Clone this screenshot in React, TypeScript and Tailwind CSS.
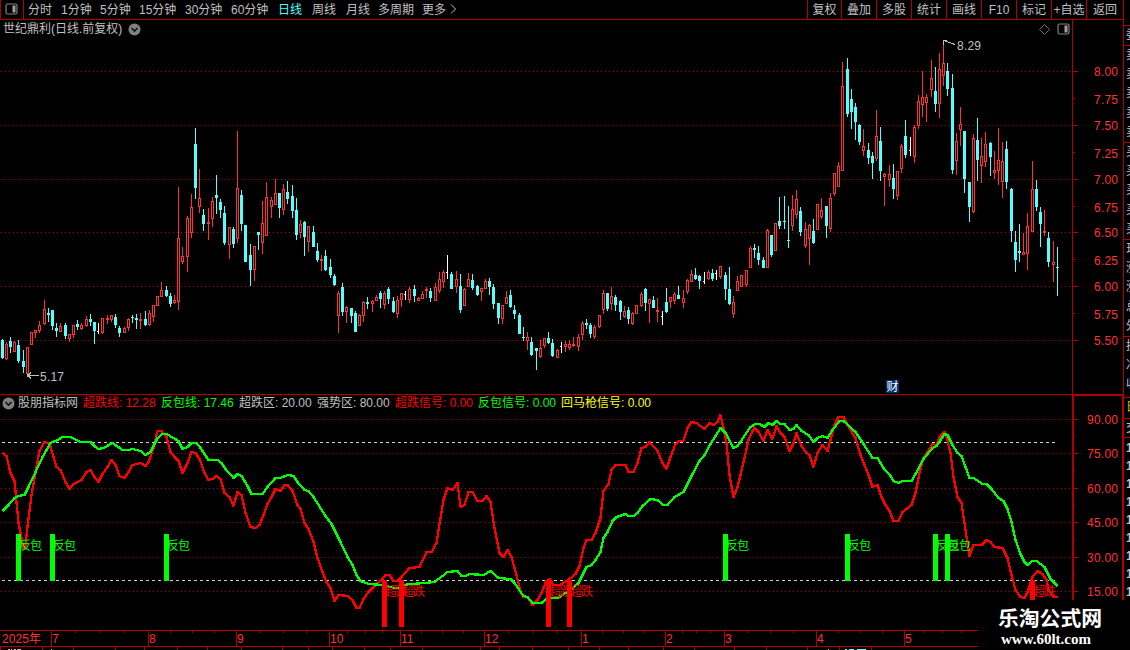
import { ReactNode } from "react"

type Candle = [x: number, high: number, top: number, bottom: number, low: number, dir: number]

// x, high, body top, body bottom, low, direction (1 up / -1 down / 0 flat)
const candles: Candle[] = [
  [2, 339, 340, 358, 359, -1], [6, 342, 344, 359, 360, 1], [10, 337, 341, 347, 353, -1], [14, 341, 342, 352, 352, 1],
  [18, 340, 345, 361, 363, -1], [23, 350, 361, 367, 373, -1], [27, 347, 347, 374, 374, 1], [31, 332, 332, 345, 345, 1],
  [35, 330, 330, 333, 338, 1], [39, 321, 325, 331, 333, 1], [44, 300, 309, 324, 325, 1], [48, 308, 313, 315, 322, -1],
  [52, 310, 310, 326, 330, -1], [56, 323, 328, 331, 337, -1], [60, 323, 326, 332, 332, 1], [65, 323, 325, 336, 339, -1],
  [69, 334, 334, 339, 342, 1], [73, 325, 325, 335, 338, 1], [77, 320, 324, 327, 330, -1], [81, 323, 325, 329, 330, 1],
  [86, 316, 319, 326, 327, 1], [90, 314, 319, 322, 326, -1], [94, 322, 322, 331, 344, -1], [98, 323, 331, 332, 334, 0],
  [102, 318, 318, 333, 334, 1], [107, 315, 318, 320, 324, 1], [111, 315, 315, 320, 322, 1], [115, 314, 317, 325, 328, -1],
  [119, 326, 328, 333, 337, -1], [124, 327, 328, 333, 333, 1], [128, 318, 319, 328, 331, 1], [132, 315, 317, 318, 323, -1],
  [136, 314, 318, 320, 329, -1], [140, 313, 319, 321, 329, 1], [145, 311, 319, 325, 326, -1], [149, 310, 313, 325, 326, 1],
  [153, 305, 305, 317, 322, 1], [157, 296, 296, 306, 306, 1], [161, 282, 290, 297, 297, 1], [166, 286, 290, 296, 297, -1],
  [170, 293, 296, 304, 307, -1], [174, 295, 300, 303, 304, 1], [178, 187, 238, 302, 310, 1], [182, 247, 256, 262, 264, 1],
  [187, 216, 218, 257, 272, 1], [191, 194, 207, 233, 238, 1], [195, 128, 144, 188, 199, -1], [199, 169, 198, 207, 213, 1],
  [203, 209, 215, 224, 231, -1], [208, 208, 222, 224, 240, 1], [212, 197, 201, 219, 227, 1], [216, 175, 195, 198, 214, -1],
  [220, 199, 202, 210, 218, -1], [224, 206, 213, 243, 245, -1], [229, 227, 227, 245, 259, 1], [233, 227, 229, 244, 248, -1],
  [237, 131, 188, 239, 243, 1], [241, 190, 195, 224, 231, -1], [245, 225, 225, 262, 262, -1], [250, 244, 255, 270, 286, -1],
  [254, 246, 246, 270, 281, 1], [258, 232, 232, 235, 250, -1], [262, 201, 223, 243, 254, 1], [266, 182, 197, 236, 236, 1],
  [271, 197, 200, 207, 218, 1], [275, 179, 193, 205, 205, 1], [279, 193, 193, 208, 218, -1], [283, 184, 189, 210, 215, 1],
  [287, 181, 192, 199, 204, -1], [292, 185, 196, 211, 218, -1], [296, 198, 210, 235, 240, -1], [300, 220, 224, 233, 238, 1],
  [304, 221, 222, 237, 256, -1], [308, 226, 226, 242, 252, 1], [313, 226, 232, 247, 247, -1], [317, 243, 251, 260, 262, -1],
  [321, 255, 259, 261, 271, 1], [325, 250, 256, 270, 271, -1], [330, 259, 267, 275, 278, -1], [334, 274, 276, 285, 286, -1],
  [338, 291, 293, 316, 333, 1], [342, 283, 287, 312, 316, -1], [346, 306, 307, 312, 323, 1], [351, 308, 308, 316, 323, -1],
  [355, 311, 313, 332, 332, -1], [359, 314, 315, 326, 326, 1], [363, 301, 302, 316, 322, 1], [367, 297, 302, 304, 309, -1],
  [372, 300, 301, 304, 312, 1], [376, 295, 297, 301, 301, 1], [380, 291, 293, 299, 308, -1], [384, 291, 293, 305, 309, 1],
  [388, 287, 289, 299, 304, -1], [393, 297, 301, 312, 313, -1], [397, 296, 300, 314, 318, 1], [401, 293, 293, 300, 307, 1],
  [405, 291, 294, 295, 300, 0], [409, 287, 289, 300, 303, 1], [414, 285, 289, 296, 302, -1], [418, 297, 298, 301, 301, 1],
  [422, 291, 294, 299, 299, 1], [426, 287, 289, 291, 298, 1], [430, 288, 291, 298, 302, -1], [435, 283, 287, 301, 301, 1],
  [439, 272, 279, 291, 293, 1], [443, 270, 272, 282, 288, 1], [447, 255, 272, 273, 279, 0], [451, 272, 274, 289, 289, -1],
  [456, 271, 279, 287, 293, 1], [460, 274, 286, 310, 313, -1], [464, 288, 289, 306, 306, 1], [468, 273, 279, 287, 287, 1],
  [472, 274, 280, 288, 290, -1], [477, 285, 286, 295, 296, -1], [481, 288, 288, 292, 301, 1], [485, 279, 281, 289, 289, 1],
  [489, 278, 281, 287, 295, -1], [493, 284, 287, 304, 309, -1], [498, 303, 303, 318, 324, -1], [502, 305, 305, 319, 324, 1],
  [506, 291, 297, 304, 304, 1], [510, 290, 295, 307, 308, -1], [514, 305, 310, 314, 319, -1], [519, 313, 315, 334, 334, -1],
  [523, 327, 337, 338, 341, -1], [527, 332, 337, 341, 350, 1], [531, 337, 342, 355, 356, -1], [536, 348, 348, 351, 370, -1],
  [540, 340, 348, 357, 358, 1], [544, 338, 338, 346, 348, 1], [548, 332, 338, 343, 344, -1], [552, 339, 343, 356, 357, -1],
  [557, 349, 350, 358, 358, 1], [561, 342, 346, 347, 353, 0], [565, 341, 344, 347, 352, 1], [569, 340, 344, 348, 350, 1],
  [573, 337, 344, 346, 347, 1], [578, 334, 337, 347, 351, 1], [582, 321, 323, 335, 340, 1], [586, 319, 323, 325, 329, -1],
  [590, 323, 325, 334, 338, -1], [594, 325, 327, 337, 339, 1], [599, 315, 315, 327, 328, 1], [603, 290, 293, 310, 314, 1],
  [607, 293, 293, 309, 311, -1], [611, 287, 296, 304, 310, 1], [615, 295, 297, 305, 311, -1], [620, 300, 301, 312, 320, -1],
  [624, 306, 311, 317, 318, 1], [628, 307, 310, 319, 324, -1], [632, 312, 313, 324, 325, 1], [636, 305, 305, 314, 314, 1],
  [641, 292, 294, 306, 307, 1], [645, 288, 289, 303, 311, -1], [649, 299, 299, 304, 323, 1], [653, 296, 300, 308, 308, -1],
  [657, 298, 310, 312, 322, 1], [662, 311, 316, 317, 325, 0], [666, 288, 302, 312, 313, -1], [670, 297, 297, 302, 308, 1],
  [674, 292, 294, 301, 304, 1], [678, 286, 295, 299, 299, -1], [683, 290, 298, 303, 308, 1], [687, 279, 280, 292, 294, 1],
  [691, 270, 274, 282, 282, 1], [695, 268, 275, 279, 280, -1], [699, 275, 276, 281, 289, -1], [704, 272, 281, 282, 284, 0],
  [708, 270, 272, 279, 280, 1], [712, 269, 273, 279, 281, -1], [716, 270, 273, 274, 280, 0], [720, 266, 266, 277, 279, 1],
  [725, 272, 275, 289, 300, -1], [729, 267, 289, 304, 305, -1], [733, 296, 302, 314, 318, 1], [737, 276, 281, 291, 291, 1],
  [741, 275, 275, 287, 287, 1], [746, 270, 270, 285, 287, 1], [750, 246, 248, 268, 268, 1], [754, 244, 248, 250, 258, -1],
  [758, 246, 253, 260, 265, -1], [763, 257, 260, 268, 268, -1], [767, 229, 230, 268, 268, 1], [771, 235, 235, 255, 257, -1],
  [775, 223, 223, 251, 251, 1], [779, 197, 221, 226, 229, -1], [784, 196, 221, 222, 229, -1], [788, 206, 240, 241, 248, -1],
  [792, 195, 209, 226, 231, 1], [796, 190, 199, 215, 219, 1], [800, 207, 211, 232, 236, -1], [805, 222, 229, 246, 248, 1],
  [809, 224, 225, 239, 265, 1], [813, 219, 231, 243, 244, -1], [817, 204, 204, 230, 230, 1], [821, 198, 210, 217, 219, 1],
  [826, 206, 206, 226, 238, -1], [830, 193, 198, 229, 232, 1], [834, 173, 173, 194, 196, 1], [838, 162, 166, 187, 187, 1],
  [842, 62, 86, 171, 171, 1], [847, 58, 69, 114, 117, -1], [851, 89, 99, 112, 129, -1], [855, 103, 107, 122, 140, -1],
  [859, 124, 125, 142, 145, -1], [863, 129, 146, 151, 156, 1], [868, 143, 150, 158, 164, -1], [872, 152, 156, 163, 179, -1],
  [876, 110, 136, 159, 161, 1], [880, 127, 141, 171, 181, -1], [884, 173, 174, 177, 206, 1], [889, 165, 174, 180, 187, 1],
  [893, 164, 178, 189, 199, -1], [897, 171, 171, 196, 200, 1], [901, 144, 146, 169, 173, 1], [905, 120, 136, 155, 158, -1],
  [910, 137, 150, 151, 156, 0], [914, 125, 127, 157, 163, 1], [918, 95, 101, 126, 129, 1], [922, 71, 97, 105, 117, 1],
  [926, 94, 97, 103, 122, 1], [931, 60, 78, 90, 97, 1], [935, 67, 91, 104, 112, -1], [939, 53, 69, 104, 118, 1],
  [943, 41, 63, 76, 86, 1], [947, 63, 71, 89, 96, -1], [952, 74, 88, 170, 174, -1], [956, 133, 141, 161, 175, 1],
  [960, 107, 124, 130, 146, 1], [964, 131, 131, 179, 193, -1], [969, 182, 182, 207, 222, -1], [973, 134, 138, 212, 213, 1],
  [977, 118, 140, 160, 181, -1], [981, 138, 156, 166, 183, 1], [985, 132, 144, 162, 167, 1], [990, 142, 143, 157, 176, -1],
  [994, 151, 170, 173, 179, 1], [998, 128, 160, 171, 185, 1], [1002, 142, 161, 182, 198, 1], [1006, 141, 149, 182, 189, -1],
  [1011, 188, 189, 231, 242, -1], [1015, 231, 242, 260, 272, -1], [1019, 224, 251, 253, 262, -1], [1023, 233, 252, 255, 255, 1],
  [1027, 213, 226, 254, 270, 1], [1032, 161, 189, 232, 232, 1], [1036, 180, 189, 207, 211, -1], [1040, 207, 212, 224, 247, -1],
  [1044, 210, 231, 233, 236, 1], [1048, 232, 238, 262, 267, -1], [1053, 241, 262, 265, 282, 1], [1057, 247, 267, 268, 296, -1],
]

const redLine =
  "2,453 6,456 10,473 14,481 18,523 23,548 25,545 27,527 31,495 35,473 39,451 44,442 48,443 50,447 56,467 60,470 65,482 69,489 73,484 81,480 86,472 90,470 94,477 98,482 102,474 107,467 111,460 115,465 119,476 124,478 128,472 132,465 140,463 145,466 148,462 153,448 157,431 161,431 166,437 170,452 174,457 178,461 182,473 187,463 191,452 195,453 199,459 204,473 208,480 212,479 216,476 220,479 224,493 229,497 233,506 237,492 241,495 245,513 250,527 255,528 259,525 263,515 267,504 271,497 275,489 280,491 284,485 287,485 292,491 297,505 300,509 304,523 308,529 313,542 317,558 322,572 326,582 330,588 334,601 338,595 347,596 352,600 356,608 359,608 363,599 368,592 377,583 382,579 385,575 389,575 393,581 397,581 401,577 409,568 419,567 426,552 431,552 436,543 440,518 443,500 447,488 452,490 457,483 460,507 464,505 468,492 472,492 477,501 482,501 486,496 490,502 494,528 499,553 503,557 507,550 511,557 516,575 520,592 523,597 527,597 532,605 537,600 541,593 545,583 549,579 553,585 559,585 566,581 570,578 575,574 579,566 583,548 586,540 591,540 595,533 600,518 603,491 608,484 611,470 615,465 625,465 628,472 633,472 637,463 641,448 645,447 649,442 657,451 662,463 666,469 670,457 675,444 679,441 683,441 687,428 691,422 696,423 704,429 709,423 713,425 717,422 720,415 723,428 726,443 729,475 733,497 737,487 740,475 744,458 748,440 752,431 754,428 758,432 763,441 767,430 772,439 776,426 780,433 784,437 789,451 793,443 796,433 801,446 806,453 809,455 813,467 817,453 822,445 827,451 830,440 834,425 838,417 843,417 847,425 855,438 860,455 864,465 868,475 872,487 877,485 881,497 885,505 889,511 893,521 898,521 902,512 911,505 915,493 919,473 923,458 927,452 932,444 936,445 939,437 944,432 947,440 950,453 953,477 957,497 961,503 965,530 969,556 973,545 981,545 986,540 990,542 994,547 1002,548 1007,558 1011,575 1015,590 1020,597 1024,598 1027,592 1032,577 1037,571 1042,574 1046,580 1048,590 1053,597 1057,597"

const greenLine =
  "2,511 8,505 14,498 18,496 24,495 28,487 35,472 42,457 50,443 57,440 62,437 70,437 80,442 90,442 95,447 98,449 103,448 112,443 122,450 128,450 132,449 140,451 145,455 150,452 153,446 157,438 162,434 166,434 173,438 178,441 182,449 187,447 191,443 196,443 200,448 208,460 217,460 221,463 225,469 233,478 237,474 241,476 247,486 251,494 262,494 267,487 275,478 280,478 287,475 293,476 297,482 304,490 308,491 313,497 325,516 331,524 340,542 347,557 352,565 356,575 360,581 368,584 383,585 390,587 394,588 400,588 403,585 410,584 425,583 434,582 442,576 447,572 457,571 461,576 465,576 469,574 483,575 490,571 498,578 510,579 514,583 523,596 527,597 532,603 541,603 547,598 557,598 562,595 570,590 578,583 586,567 591,565 595,560 600,552 603,538 607,532 612,521 616,517 625,514 628,516 633,516 637,513 642,506 650,499 657,500 663,505 667,505 674,497 683,492 692,474 699,461 704,455 710,444 720,428 725,433 733,448 737,446 750,427 755,424 759,424 764,427 768,423 772,425 776,421 780,424 784,424 789,430 793,429 796,425 801,431 808,435 813,442 817,438 822,436 827,438 832,430 839,421 843,421 855,432 863,444 872,458 877,458 883,468 890,476 893,481 898,483 902,481 911,481 915,474 923,459 932,448 936,446 944,434 947,435 952,445 957,453 961,456 969,478 973,478 982,484 986,484 991,489 998,498 1003,501 1007,509 1011,522 1015,540 1020,554 1024,562 1027,565 1032,561 1036,561 1044,567 1050,579 1057,586"

const majorPrices: [string, number][] = [["8.00", 71], ["7.50", 125], ["7.00", 179], ["6.50", 232], ["6.00", 286], ["5.50", 340]]
const minorPrices: [string, number][] = [["7.75", 98], ["7.25", 152], ["6.75", 206], ["6.25", 259], ["5.75", 313]]
const levels: [string, number][] = [["90.00", 419], ["75.00", 453], ["60.00", 488], ["45.00", 522], ["30.00", 557], ["15.00", 591]]

const months: [string, number][] = [
  ["7", 51], ["8", 148], ["9", 236], ["10", 329], ["11", 400], ["12", 484],
  ["1", 581], ["2", 665], ["3", 724], ["4", 816], ["5", 904],
]
const weekTicks = [75, 100, 124, 170, 192, 214, 260, 283, 306, 347, 365, 382, 421, 442, 463, 508, 533, 557, 602, 623, 644, 682, 696, 710, 747, 770, 793, 838, 860, 882, 923, 942, 961]
const lowerTicks = [0, 42, 73, 115, 144, 177, 207, 241, 282, 308, 332, 364, 390, 422, 480, 499, 532, 568, 599, 628, 663, 694, 734, 766, 807, 839, 871]

const periods: [string, string][] = [
  ["分时", "w-[33px]"], ["1分钟", "w-[39px]"], ["5分钟", "w-[39px]"], ["15分钟", "w-[46px]"], ["30分钟", "w-[46px]"],
  ["60分钟", "w-[47px]"], ["日线", "w-[34px]"], ["周线", "w-[34px]"], ["月线", "w-[32px]"], ["多周期", "w-[44px]"], ["更多", "w-[26px]"],
]
const tools: [string, string][] = [
  ["复权", "w-[34px]"], ["叠加", "w-[35px]"], ["多股", "w-[35px]"], ["统计", "w-[35px]"], ["画线", "w-[35px]"],
  ["F10", "w-[35px]"], ["标记", "w-[35px]"], ["+自选", "w-[35px]"], ["返回", "w-[37px]"],
]
const legend: [string, string][] = [
  ["股朋指标网", "w-[65px] text-[#c0c0c0]"],
  ["超跌线: 12.28", "w-[78px] text-[#ff0000]"],
  ["反包线: 17.46", "w-[78px] text-[#00ff00]"],
  ["超跌区: 20.00", "w-[78px] text-[#c0c0c0]"],
  ["强势区: 80.00", "w-[78px] text-[#c0c0c0]"],
  ["超跌信号: 0.00", "w-[83px] text-[#ff0000]"],
  ["反包信号: 0.00", "w-[83px] text-[#00ff00]"],
  ["回马枪信号: 0.00", "w-[100px] text-[#ffff00]"],
]

const greenBars = [16, 50, 164, 723, 845, 933, 945]
const redBars = [382, 399, 546, 567, 1030]

const SplitIcon = ({ className }: { className: string }) => (
  <svg className={className} width="13" height="12" viewBox="0 0 13 12">
    <rect x="1" y="1" width="11" height="10" rx="1.5" fill="none" stroke="#808080" strokeWidth="1.2" />
    <rect x="7.5" y="2.5" width="3" height="7" fill="#a0a0a0" />
  </svg>
)

const RoundArrow = () => (
  <svg className="shrink-0" width="13" height="13" viewBox="0 0 13 13">
    <circle cx="6.5" cy="6.5" r="6" fill="#808080" />
    <path d="M3.5 5 L6.5 8 L9.5 5" fill="none" stroke="#101010" strokeWidth="1.6" />
  </svg>
)

const GridLine = ({ y }: { y: number }) => (
  <line x1="1" x2="1072" y1={y + 0.5} y2={y + 0.5} stroke="#b00000" strokeDasharray="1 3" />
)

const CandleShape = ({ c }: { c: Candle }) => {
  const [x, high, top, bottom, low, dir] = c
  if (dir === 0) {
    return (
      <g fill="#ffffff">
        <rect x={x} y={high} width="1" height={low - high} />
        <rect x={x - 1} y={top} width="1" height="1" />
      </g>
    )
  }
  if (dir < 0) {
    return (
      <g fill="#54ffff">
        <rect x={x} y={high} width="1" height={low - high} />
        <rect x={x - 1} y={top} width="3" height={bottom - top} />
      </g>
    )
  }
  return (
    <g fill="#ff3232">
      <rect x={x} y={high} width="1" height={top - high} />
      <rect x={x} y={bottom} width="1" height={low - bottom} />
      <rect x={x - 1} y={top} width="3" height={bottom - top} />
      {bottom - top > 2 && <rect x={x} y={top + 1} width="1" height={bottom - top - 2} fill="#000000" />}
    </g>
  )
}

const StripRow = ({ children }: { children: ReactNode }) => (
  <div className="h-[19.2px] pl-[2px] leading-[19px] whitespace-nowrap">{children}</div>
)

function PriceChart() {
  return (
    <svg className="block" width="1123" height="354" viewBox="0 40 1123 354" shapeRendering="crispEdges">
      {majorPrices.map(([, y]) => <GridLine key={y} y={y} />)}
      {candles.map((c) => <CandleShape key={c[0]} c={c} />)}
      <rect x="1072" y="40" width="1" height="354" fill="#b00000" />
      {majorPrices.map(([label, y]) => (
        <g key={label}>
          <rect x="1073" y={y} width="5" height="1" fill="#b00000" />
          <text x="1094" y={y + 5} fontSize="12" textLength="24" fill="#ff3232">{label}</text>
        </g>
      ))}
      {minorPrices.map(([label, y]) => (
        <g key={label}>
          <rect x="1073" y={y} width="2" height="1" fill="#b00000" />
          <text x="1094" y={y + 6} fontSize="12" textLength="24" fill="#ff3232">{label}</text>
        </g>
      ))}
      <path d="M943.5 45 V40.5 H947 M943.5 40.5 L955 44.5" fill="none" stroke="#c0c0c0" />
      <text x="957" y="50" fontSize="12" textLength="24" fill="#c0c0c0">8.29</text>
      <path d="M39 375.5 H28 M31 372.5 L28 375.5 L31 378.5" fill="none" stroke="#c0c0c0" />
      <rect x="27" y="374" width="2" height="3" fill="#c0c0c0" />
      <text x="40" y="381" fontSize="12" textLength="24" fill="#c0c0c0">5.17</text>
      <rect x="886" y="380" width="13" height="13" fill="#003070" />
      <text x="886.5" y="391" fontSize="12" fill="#ffffff">财</text>
    </svg>
  )
}

function IndicatorChart() {
  return (
    <svg className="block" width="1123" height="219" viewBox="0 411 1123 219" shapeRendering="crispEdges">
      {levels.map(([, y]) => <GridLine key={y} y={y} />)}
      <line x1="2" x2="1056" y1="442.5" y2="442.5" stroke="#d0d0d0" strokeDasharray="3 3" />
      <line x1="2" x2="1056" y1="580.5" y2="580.5" stroke="#d0d0d0" strokeDasharray="3 3" />
      <g fill="none" strokeWidth="2.3" strokeLinejoin="round" transform="translate(0.5 0)">
        <polyline points={redLine} stroke="#ff0000" />
        <polyline points={greenLine} stroke="#00ff00" />
      </g>
      {greenBars.map((x) => (
        <g key={x} fill="#00ff00">
          <rect x={x} y="534" width="5" height="47" />
          <text x={x + 3} y="550" fontSize="12" textLength="23">反包</text>
        </g>
      ))}
      {redBars.map((x) => (
        <g key={x} fill="#ff0000">
          <rect x={x} y="580" width="5" height="47" />
          <text x={x + 3} y="596" fontSize="12" textLength="23">超跌</text>
        </g>
      ))}
      <rect x="1072" y="411" width="2" height="219" fill="#b00000" />
      <rect x="1122" y="411" width="1" height="219" fill="#b00000" />
      {levels.map(([label, y]) => (
        <g key={label}>
          <rect x="1074" y={y} width="4" height="1" fill="#b00000" />
          <rect x="1074" y={y + 17} width="1" height="1" fill="#b00000" />
          <text x="1087" y={y + 5} fontSize="12" textLength="31" fill="#ff3232">{label}</text>
        </g>
      ))}
    </svg>
  )
}

function TimeAxis() {
  return (
    <svg className="block" width="1123" height="20" viewBox="0 630 1123 20" shapeRendering="crispEdges">
      <g fill="#b00000">
        <rect x="0" y="630" width="1123" height="1" />
        <rect x="0" y="646" width="1123" height="1" />
        {months.map(([label, x]) => <rect key={label} x={x} y="631" width="1" height="15" />)}
        {weekTicks.map((x) => <rect key={x} x={x} y="631" width="1" height="2" />)}
        {lowerTicks.map((x) => <rect key={x} x={x} y="647" width="1" height="3" />)}
      </g>
      <text x="2" y="643" fontSize="12" textLength="39" fill="#ff3232">2025年</text>
      {months.map(([label, x]) => (
        <text key={label} x={x + 1} y="643" fontSize="12" fill="#ff3232">{label}</text>
      ))}
      <path d="M8 649.5 h2 m1 0 h1 m2 0 h2 m1 0 h4 M51 649.5 h1 M828 649.5 h1" stroke="#c0c0c0" />
      <path d="M845 649.5 h2 m2 0 h5 m3 0 h9" stroke="#54ffff" />
    </svg>
  )
}

export default function App() {
  return (
    <div className="relative flex h-[650px] w-[1130px] overflow-hidden bg-black text-[12px] text-[#c0c0c0] font-['Liberation_Sans','Noto_Sans_CJK_SC',sans-serif]">
      <main className="flex w-[1123px] shrink-0 flex-col">
        {/* 顶部工具栏 */}
        <nav className="flex h-[20px] shrink-0 border-b border-[#b00000] leading-[20px] whitespace-nowrap">
          <div className="mr-1 flex w-6 shrink-0 border-x border-[#b00000]">
            <SplitIcon className="mt-[3px] ml-[4px]" />
          </div>
          {periods.map(([label, width]) => (
            <span key={label} className={label === "日线" ? `${width} h-[19px] shrink-0 text-[#54ffff]` : `${width} h-[19px] shrink-0`}>
              {label}
            </span>
          ))}
          <svg className="mt-1 ml-[2px]" width="7" height="10" viewBox="0 0 7 10">
            <path d="M1 0.5 L5.5 5 L1 9.5" fill="none" stroke="#c0c0c0" />
          </svg>
          <div className="ml-auto flex">
            {tools.map(([label, width]) => (
              <span key={label} className={`${width} h-[19px] shrink-0 border-l border-[#b00000] text-center`}>
                {label}
              </span>
            ))}
          </div>
        </nav>

        {/* 标题 */}
        <div className="flex h-5 shrink-0">
          <div className="flex w-[1072px] items-center pb-[2px] pl-[3px]">
            <span className="w-[125px] whitespace-nowrap">世纪鼎利(日线.前复权)</span>
            <RoundArrow />
            <svg className="ml-auto" width="11" height="11" viewBox="0 0 11 11">
              <path d="M5.5 0.5 L10.5 5.5 L5.5 10.5 L0.5 5.5 Z" fill="none" stroke="#707070" />
            </svg>
            <SplitIcon className="mr-[2px] ml-[7px]" />
          </div>
          <div className="w-[51px] border-l border-[#b00000]" />
        </div>
        <PriceChart />

        {/* 副图指标 */}
        <div className="flex h-[17px] shrink-0 border-t border-[#b00000]">
          <div className="flex w-[1072px] items-center pl-[2px] whitespace-nowrap">
            <RoundArrow />
            <div className="ml-[3px] flex leading-4">
              {legend.map(([label, style]) => (
                <span key={label} className={`${style} shrink-0`}>{label}</span>
              ))}
            </div>
          </div>
          <div className="w-[51px] border-t border-r border-l-2 border-[#b00000]" />
        </div>
        <IndicatorChart />
        <TimeAxis />
      </main>

      {/* 右侧盘口 */}
      <aside className="w-[7px] shrink-0 overflow-hidden border-l border-[#b00000]">
        <div className="h-[25px]" />
        <div className="h-5 border-t border-[#b00000]"><StripRow>委</StripRow></div>
        <div className="h-[97px] border-t border-[#b00000]">
          {[5, 4, 3, 2, 1].map((n) => <StripRow key={n}>卖</StripRow>)}
        </div>
        <div className="h-[97px] border-t border-[#b00000]">
          {[1, 2, 3, 4, 5].map((n) => <StripRow key={n}>买</StripRow>)}
        </div>
        <div className="h-[97px] border-t border-[#b00000]">
          {["现", "涨", "涨", "总", "外"].map((t, i) => <StripRow key={i}>{t}</StripRow>)}
        </div>
        <div className="h-[61px] border-t border-[#b00000]">
          {["换", "净", "收"].map((t) => <StripRow key={t}>{t}</StripRow>)}
        </div>
        <div className="h-[21px] border-t border-[#b00000] text-[#c8c800]"><StripRow>日</StripRow></div>
        <div className="h-[19px] border-t border-[#b00000]"><StripRow>交</StripRow></div>
        <div className="border-t border-[#b00000] pt-px font-bold">
          {[0, 1, 2, 3, 4, 5, 6, 7, 8].map((n) => <div key={n} className="h-[18px] pl-[2px] leading-[18px]">1</div>)}
        </div>
      </aside>

      {/* 水印 */}
      <div className="absolute right-0 bottom-0 h-[50px] w-[152px] bg-black pl-5 text-white">
        <div className="mt-[5px] h-[27px] text-[20.8px] leading-[27px] font-bold whitespace-nowrap">乐淘公式网</div>
        <div className="pl-[3px] font-['Liberation_Serif',serif] text-[15px] leading-[14px] font-bold">www.60lt.com</div>
      </div>
    </div>
  )
}
